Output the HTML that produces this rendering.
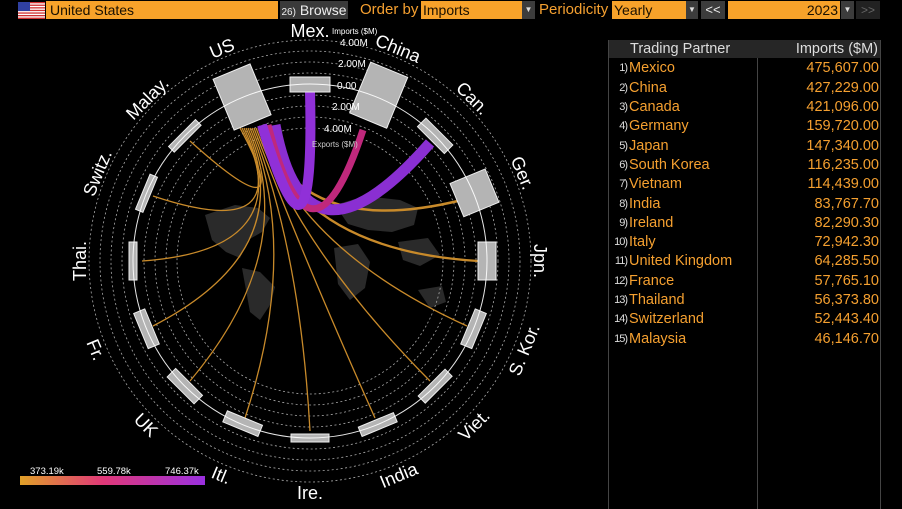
<!DOCTYPE html>
<html><head><meta charset="utf-8"><style>
body{margin:0;width:902px;height:509px;background:#000;overflow:hidden;font-family:"Liberation Sans",sans-serif;position:relative}
.a{position:absolute}
.of{background:#f7a22a;color:#1a1000;font-size:14px;line-height:18px;height:18px;top:1px}
.dd{background:#3c3c3c;color:#ddd;font-size:8px;text-align:center;line-height:18px;height:18px;top:1px}
.lbl{color:#f5a030;font-size:15px;top:1px;line-height:18px}
table{position:absolute;left:608px;top:40px;width:273px;border-collapse:collapse;font-size:14.5px;table-layout:fixed}
td{padding:0;height:19.3px;line-height:19px;white-space:nowrap;overflow:hidden}
.n{color:#ddd;font-size:11px;text-align:right;padding-right:2px;letter-spacing:-1px}
.c{color:#f5a030}
.v{color:#f5a030;text-align:right;padding-right:2px}
</style></head><body>
<svg class="a" style="left:18px;top:2px" width="27" height="17" viewBox="0 0 27 17">
<rect width="27" height="17" fill="#fff"/>
<g fill="#d03030"><rect y="0" width="27" height="1.3"/><rect y="2.6" width="27" height="1.3"/><rect y="5.2" width="27" height="1.3"/><rect y="7.8" width="27" height="1.3"/><rect y="10.4" width="27" height="1.3"/><rect y="13" width="27" height="1.3"/><rect y="15.6" width="27" height="1.4"/></g>
<rect width="12" height="9" fill="#3040a0"/></svg>
<div class="a of" style="left:46px;width:228px;padding-left:4px">United States</div>
<div class="a" style="left:280px;top:1px;width:68px;height:18px;background:#3a3a3a;color:#eee;font-size:14px;line-height:18px;text-align:center"><span style="font-size:10px">26)</span> Browse</div>
<div class="a lbl" style="left:360px">Order by</div>
<div class="a of" style="left:421px;width:99px;padding-left:2px">Imports</div>
<div class="a dd" style="left:522px;width:13px">▼</div>
<div class="a lbl" style="left:539px">Periodicity</div>
<div class="a of" style="left:612px;width:72px;padding-left:2px">Yearly</div>
<div class="a dd" style="left:686px;width:12px">▼</div>
<div class="a dd" style="left:701px;width:24px;font-size:13px;color:#eee">&lt;&lt;</div>
<div class="a of" style="left:728px;width:110px;text-align:right;padding-right:2px">2023</div>
<div class="a dd" style="left:841px;width:13px">▼</div>
<div class="a dd" style="left:856px;width:24px;font-size:12px;color:#666;background:#222">&gt;&gt;</div>

<div class="a" style="left:608px;top:40px;width:1px;height:469px;background:#444"></div>
<div class="a" style="left:880px;top:40px;width:1px;height:469px;background:#444"></div>
<div class="a" style="left:757px;top:40px;width:1px;height:469px;background:#444"></div>
<div class="a" style="left:609px;top:40px;width:271px;height:18px;background:#262626"></div>
<table>
<colgroup><col style="width:21px"><col style="width:128px"><col style="width:124px"></colgroup>
<tr><td class="n"></td><td style="color:#ddd;padding-left:1px">Trading Partner</td><td style="color:#ddd;text-align:right;padding-right:3px">Imports ($M)</td></tr>
<tr><td class="n">1)</td><td class="c">Mexico</td><td class="v">475,607.00</td></tr>
<tr><td class="n">2)</td><td class="c">China</td><td class="v">427,229.00</td></tr>
<tr><td class="n">3)</td><td class="c">Canada</td><td class="v">421,096.00</td></tr>
<tr><td class="n">4)</td><td class="c">Germany</td><td class="v">159,720.00</td></tr>
<tr><td class="n">5)</td><td class="c">Japan</td><td class="v">147,340.00</td></tr>
<tr><td class="n">6)</td><td class="c">South Korea</td><td class="v">116,235.00</td></tr>
<tr><td class="n">7)</td><td class="c">Vietnam</td><td class="v">114,439.00</td></tr>
<tr><td class="n">8)</td><td class="c">India</td><td class="v">83,767.70</td></tr>
<tr><td class="n">9)</td><td class="c">Ireland</td><td class="v">82,290.30</td></tr>
<tr><td class="n">10)</td><td class="c">Italy</td><td class="v">72,942.30</td></tr>
<tr><td class="n">11)</td><td class="c">United Kingdom</td><td class="v">64,285.50</td></tr>
<tr><td class="n">12)</td><td class="c">France</td><td class="v">57,765.10</td></tr>
<tr><td class="n">13)</td><td class="c">Thailand</td><td class="v">56,373.80</td></tr>
<tr><td class="n">14)</td><td class="c">Switzerland</td><td class="v">52,443.40</td></tr>
<tr><td class="n">15)</td><td class="c">Malaysia</td><td class="v">46,146.70</td></tr>
</table>

<svg class="a" style="left:0;top:0" width="600" height="509" viewBox="0 0 600 509" font-family="Liberation Sans, sans-serif">
<defs><linearGradient id="g" x1="0" x2="1"><stop offset="0" stop-color="#e0a028"/><stop offset=".45" stop-color="#e03878"/><stop offset="1" stop-color="#9a30e0"/></linearGradient></defs>
<g fill="#2a2a2a">
<path d="M205 215 L235 205 L258 208 L270 218 L262 232 L248 240 L240 258 L226 252 L212 240 Z"/>
<path d="M242 268 L260 272 L275 287 L270 305 L260 320 L250 312 L246 290 Z"/>
<path d="M335 205 L365 196 L400 200 L418 208 L414 225 L392 232 L368 230 L348 224 Z"/>
<path d="M334 248 L358 244 L370 262 L365 288 L350 300 L338 284 Z"/>
<path d="M398 242 L428 238 L440 255 L420 266 L403 260 Z"/>
<path d="M418 290 L442 286 L446 302 L430 308 Z"/>
</g>
<g fill="none" stroke="#aaa" stroke-width=".8" stroke-dasharray="2 2.5">
<circle cx="310" cy="261" r="133"/><circle cx="310" cy="261" r="144"/><circle cx="310" cy="261" r="155"/><circle cx="310" cy="261" r="166"/>
<circle cx="310" cy="261" r="188"/><circle cx="310" cy="261" r="199"/><circle cx="310" cy="261" r="210"/><circle cx="310" cy="261" r="221"/>
</g>
<g fill="none" stroke="#c88a2a" stroke-width="1.3">
<path d="M240 128 Q300 240 190 141"/>
<path d="M242 128 Q300 245 153 196"/>
<path d="M244 128 Q300 250 142 261"/>
<path d="M246 128 Q300 250 153 326"/>
<path d="M248 128 Q300 250 190 381"/>
<path d="M250 128 Q300 250 245 418"/>
<path d="M252 128 Q300 250 310 431"/>
<path d="M254 128 Q300 250 375 418"/>
<path d="M256 128 Q300 250 430 381"/>
<path d="M258 128 Q300 250 467 326"/>
<path d="M260 128 Q300 250 478 261" stroke-width="2.3"/>
<path d="M262 128 Q300 240 462 200" stroke-width="2.5"/>
</g>
<path d="M275 125 Q305 285 430 143" fill="none" stroke="#8a2fd2" stroke-width="11"/>
<path d="M268 125 Q310 290 363 130" fill="none" stroke="#c0287c" stroke-width="7"/>
<path d="M262 125 Q315 300 310 92" fill="none" stroke="#9030d8" stroke-width="10"/>
<g fill="#b4b4b4" stroke="#eee" stroke-width="1">
<rect x="290" y="77" width="40" height="15"/>
<rect x="290" y="54" width="40" height="55" transform="rotate(22.5 310 261)"/>
<rect x="291" y="78" width="38" height="12" transform="rotate(45 310 261)"/>
<rect x="292" y="64" width="36" height="38" transform="rotate(67.5 310 261)"/>
<rect x="291" y="75" width="38" height="18" transform="rotate(90 310 261)"/>
<rect x="291" y="78" width="38" height="12" transform="rotate(112.5 310 261)"/>
<rect x="291" y="79" width="38" height="10" transform="rotate(135 310 261)"/>
<rect x="291" y="79" width="38" height="10" transform="rotate(157.5 310 261)"/>
<rect x="291" y="80" width="38" height="8" transform="rotate(180 310 261)"/>
<rect x="291" y="79" width="38" height="12" transform="rotate(202.5 310 261)"/>
<rect x="291" y="78" width="38" height="12" transform="rotate(225 310 261)"/>
<rect x="291" y="78" width="38" height="12" transform="rotate(247.5 310 261)"/>
<rect x="291" y="80" width="38" height="8" transform="rotate(270 310 261)"/>
<rect x="291" y="80" width="38" height="8" transform="rotate(292.5 310 261)"/>
<rect x="291" y="80" width="38" height="8" transform="rotate(315 310 261)"/>
<rect x="290" y="56" width="40" height="55" transform="rotate(337.5 310 261)"/>
</g>
<circle cx="310" cy="261" r="177" fill="none" stroke="#fff" stroke-width="1" opacity=".9"/>
<g fill="#fff" font-size="18" text-anchor="middle">
<text x="310" y="37">Mex.</text>
<text x="310" y="37" transform="rotate(22.5 310 261)">China</text>
<text x="310" y="37" transform="rotate(45 310 261)">Can.</text>
<text x="310" y="37" transform="rotate(67.5 310 261)">Ger.</text>
<text x="310" y="37" transform="rotate(90 310 261)">Jpn.</text>
<text x="310" y="499" transform="rotate(-67.5 310 261)">S. Kor.</text>
<text x="310" y="499" transform="rotate(-45 310 261)">Viet.</text>
<text x="310" y="499" transform="rotate(-22.5 310 261)">India</text>
<text x="310" y="499">Ire.</text>
<text x="310" y="499" transform="rotate(22.5 310 261)">Itl.</text>
<text x="310" y="499" transform="rotate(45 310 261)">UK</text>
<text x="310" y="499" transform="rotate(67.5 310 261)">Fr.</text>
<text x="310" y="37" transform="rotate(-90 310 261)">Thai.</text>
<text x="310" y="37" transform="rotate(-67.5 310 261)">Switz.</text>
<text x="310" y="37" transform="rotate(-45 310 261)">Malay.</text>
<text x="310" y="37" transform="rotate(-22.5 310 261)">US</text>
</g>
<g fill="#fff" font-size="10">
<text x="332" y="34" font-size="8">Imports ($M)</text>
<text x="340" y="46">4.00M</text>
<text x="338" y="67">2.00M</text>
<text x="337" y="89">0.00</text>
<text x="332" y="110">2.00M</text>
<text x="324" y="132">4.00M</text>
<text x="312" y="147" font-size="8" fill="#ccc">Exports ($M)</text>
</g>
<rect x="20" y="476" width="185" height="9" fill="url(#g)"/>
<g fill="#fff" font-size="9.5"><text x="30" y="474">373.19k</text><text x="97" y="474">559.78k</text><text x="165" y="474">746.37k</text></g>
</svg>
</body></html>
